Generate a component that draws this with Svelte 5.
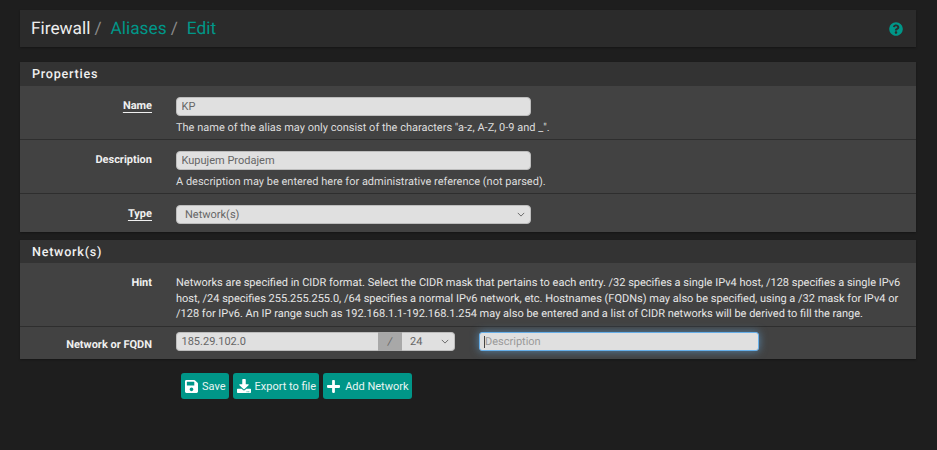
<script>
  let name = $state("KP");
  let descr = $state("Kupujem Prodajem");
  let address = $state("185.29.102.0");
</script>

<div class="page">
  <header class="crumbs">
    <h1><span>Firewall</span><i>/</i><a href="#aliases">Aliases</a><i>/</i><a href="#edit">Edit</a></h1>
    <svg class="help" viewBox="0 0 512 512" width="14" height="14">
      <path fill="#009688" d="M504 256c0 137-111 248-248 248S8 393 8 256 119 8 256 8s248 111 248 248z" />
      <path fill="#2b2b2b" d="M262.700 90c-54.500 0-89.300 23-116.600 63.800-3.500 5.300-2.400 12.400 2.700 16.300l34.700 26.300c5.200 3.900 12.600 3 16.700-2.100 17.900-22.700 30.100-35.800 57.300-35.800 20.400 0 45.700 13.100 45.700 32.900 0 15-12.400 22.700-32.500 34-23.500 13.200-54.600 29.600-54.600 70.600V302c0 6.600 5.400 12 12 12h56c6.600 0 12-5.400 12-12v-1.300c0-28.400 83-29.600 83-106.700 0-58-60.200-102-116.400-102zM256 338c-25.400 0-46 20.600-46 46s20.600 46 46 46 46-20.600 46-46-20.600-46-46-46z" />
    </svg>
  </header>

  <section class="panel first">
    <h2>Properties</h2>
    <div class="row">
      <label class="lbl req" for="name">Name</label>
      <div class="ctl">
        <input id="name" bind:value={name} />
        <p>The name of the alias may only consist of the characters "a-z, A-Z, 0-9 and _".</p>
      </div>
    </div>
    <div class="row">
      <label class="lbl" for="descr">Description</label>
      <div class="ctl">
        <input id="descr" bind:value={descr} />
        <p>A description may be entered here for administrative reference (not parsed).</p>
      </div>
    </div>
    <div class="row">
      <label class="lbl req" for="type">Type</label>
      <div class="ctl">
        <div class="select" id="type">
          <span>Network(s)</span>
          <svg viewBox="0 0 10 6" width="8" height="5"><path d="M1 1l4 4 4-4" fill="none" stroke="#666" stroke-width="1.200" /></svg>
        </div>
      </div>
    </div>
  </section>

  <section class="panel second">
    <h2>Network(s)</h2>
    <div class="row hint">
      <div class="lbl">Hint</div>
      <div class="ctl wide">
        Networks are specified in CIDR format. Select the CIDR mask that pertains to each entry. /32 specifies a single IPv4 host, /128 specifies a single IPv6 host, /24 specifies 255.255.255.0, /64 specifies a normal IPv6 network, etc. Hostnames (FQDNs) may also be specified, using a /32 mask for IPv4 or /128 for IPv6. An IP range such as 192.168.1.1-192.168.1.254 may also be entered and a list of CIDR networks will be derived to fill the range.
      </div>
    </div>
    <div class="row net">
      <label class="lbl" for="addr">Network or FQDN</label>
      <div class="group">
        <input id="addr" class="addr" bind:value={address} />
        <span class="slash">/</span>
        <div class="mask">
          <span>24</span>
          <svg viewBox="0 0 10 6" width="8" height="5"><path d="M1 1l4 4 4-4" fill="none" stroke="#666" stroke-width="1.200" /></svg>
        </div>
      </div>
      <div class="descr-focus"><span class="caret"></span><span class="ph">Description</span></div>
    </div>
  </section>

  <div class="actions">
    <button class="save">
      <svg viewBox="0 0 448 512" width="13" height="15"><path fill="#fff" d="M433.900 129.900l-83.900-83.900A48 48 0 0 0 316.100 32H48C21.500 32 0 53.500 0 80v352c0 26.500 21.500 48 48 48h352c26.500 0 48-21.500 48-48V163.900a48 48 0 0 0-14.100-34zM224 416c-35.300 0-64-28.700-64-64s28.700-64 64-64 64 28.700 64 64-28.700 64-64 64zm96-304.500V212c0 6.600-5.400 12-12 12H76c-6.600 0-12-5.400-12-12V108c0-6.600 5.400-12 12-12h228.500c3.200 0 6.200 1.300 8.500 3.500l3.500 3.500c2.200 2.200 3.500 5.300 3.500 8.500z" /></svg>
      Save
    </button>
    <button class="export">
      <svg viewBox="0 0 512 512" width="14" height="14"><path fill="#fff" d="M216 0h80c13.300 0 24 10.700 24 24v168h87.700c17.800 0 26.700 21.500 14.100 34.100L269.700 378.300c-7.500 7.500-19.800 7.500-27.300 0L90.100 226.100c-12.600-12.600-3.700-34.100 14.100-34.100H192V24c0-13.300 10.700-24 24-24zm296 376v112c0 13.300-10.700 24-24 24H24c-13.300 0-24-10.700-24-24V376c0-13.300 10.700-24 24-24h146.700l49 49c20.100 20.100 52.500 20.100 72.600 0l49-49H488c13.300 0 24 10.700 24 24zm-124 88c0-11-9-20-20-20s-20 9-20 20 9 20 20 20 20-9 20-20zm64 0c0-11-9-20-20-20s-20 9-20 20 9 20 20 20 20-9 20-20z" /></svg>
      Export to file
    </button>
    <button>
      <svg viewBox="0 0 448 512" width="13" height="15"><path fill="#fff" d="M416 208H272V64c0-17.700-14.300-32-32-32h-32c-17.700 0-32 14.300-32 32v144H32c-17.700 0-32 14.300-32 32v32c0 17.700 14.300 32 32 32h144v144c0 17.700 14.300 32 32 32h32c17.700 0 32-14.300 32-32V304h144c17.700 0 32-14.300 32-32v-32c0-17.700-14.300-32-32-32z" /></svg>
      Add Network
    </button>
  </div>
</div>

<style>
  :global(body) {
    margin: 0;
    background: #1e1e1e;
  }

  .page {
    box-sizing: border-box;
    width: 937px;
    height: 450px;
    padding: 10px 21px 0 20px;
    font-family: Roboto, "Liberation Sans", sans-serif;
    font-size: 11px;
    text-rendering: geometricPrecision;
    color: #ddd;
    overflow: hidden;
  }

  .crumbs {
    display: flex;
    align-items: center;
    justify-content: space-between;
    height: 37px;
    padding: 0 13px 0 11px;
    background: #2b2b2b;
    box-shadow: 0 1px 2px rgba(0, 0, 0, 0.3);
  }

  h1 {
    margin: 0;
    padding-top: 2px;
    font-size: 17.300px;
    font-weight: 400;
    line-height: 33px;
    color: #eee;
    white-space: nowrap;
  }

  h1 a {
    color: #009688;
    text-decoration: none;
  }

  h1 i {
    font-style: normal;
    color: #8a8a8a;
    margin: 0 9px 0 4px;
  }

  .panel {
    background: #424242;
    box-shadow: 0 1px 2px rgba(0, 0, 0, 0.3);
  }

  .first {
    margin-top: 15px;
  }

  .second {
    margin-top: 8px;
  }

  h2 {
    box-sizing: border-box;
    margin: 0;
    height: 24px;
    line-height: 23px;
    padding: 1px 0 0 12px;
    font-size: 12.600px;
    font-weight: 500;
    letter-spacing: 0.75px;
    color: #f0f0f0;
    background: #333;
  }

  .second h2 {
    height: 23px;
  }

  .row {
    box-sizing: border-box;
    display: flex;
    border-top: 1px solid #2e2e2e;
    padding-top: 11px;
  }

  h2 + .row {
    border-top: 0;
  }

  .first .row:nth-of-type(1) {
    height: 53px;
  }

  .first .row:nth-of-type(2) {
    height: 54px;
  }

  .first .row:nth-of-type(3) {
    height: 39px;
  }

  .lbl {
    flex: none;
    box-sizing: border-box;
    width: 132px;
    text-align: right;
    font-weight: 700;
    color: #f0f0f0;
    line-height: 17px;
  }

  .req {
    text-decoration: underline;
    text-underline-offset: 3px;
  }

  .ctl {
    margin-left: 24px;
    width: 355px;
  }

  .ctl p {
    margin: 4px 0 0;
    line-height: 16px;
    white-space: nowrap;
  }

  input,
  .select,
  .mask,
  .descr-focus {
    box-sizing: border-box;
    height: 19px;
    font: inherit;
    color: #666;
    background: #e0e0e0;
    border: 1px solid #bdbdbd;
  }

  input {
    display: block;
    width: 100%;
    padding: 0 4.500px;
    border-radius: 4px;
    outline: none;
  }

  .select {
    display: flex;
    align-items: center;
    justify-content: space-between;
    padding: 0 5px 0 8px;
    border-radius: 4px;
  }

  .hint {
    height: 63px;
    padding-top: 12px;
  }

  .ctl.wide {
    width: 730px;
    line-height: 15.700px;
    color: #e6e6e6;
  }

  .hint .lbl {
    line-height: 15.700px;
  }

  .net {
    height: 33px;
    padding-top: 5px;
  }

  .net .lbl {
    padding-top: 4px;
  }

  .group {
    display: flex;
    margin-left: 24px;
    width: 279px;
  }

  .addr {
    width: 202px;
    border-radius: 4px 0 0 4px;
    border-right: 0;
  }

  .slash {
    box-sizing: border-box;
    width: 24px;
    height: 19px;
    line-height: 19px;
    text-align: center;
    background: #a8a8a8;
    color: #666;
    font-style: italic;
  }

  .mask {
    display: flex;
    flex: 1;
    align-items: center;
    justify-content: space-between;
    padding: 0 5px 0 8px;
    border-left: 0;
    border-radius: 0 4px 4px 0;
  }

  .descr-focus {
    display: flex;
    align-items: center;
    width: 280px;
    margin-left: 24px;
    padding-left: 4px;
    border-radius: 3px;
    border-color: #66afe9;
    box-shadow: 0 0 8px rgba(102, 175, 233, 0.6);
  }

  .caret {
    width: 1px;
    height: 12px;
    background: #444;
  }

  .ph {
    color: #9a9a9a;
  }

  .actions {
    display: flex;
    gap: 4px;
    margin: 14px 0 0 161px;
  }

  button {
    display: flex;
    align-items: center;
    gap: 5px;
    height: 26px;
    padding: 0 3px 0 4px;
    font: inherit;
    color: #e8f5f3;
    background: #009688;
    border: none;
    border-radius: 3px;
  }

  .save {
    gap: 4px;
  }

  .export {
    gap: 4px;
  }
</style>
